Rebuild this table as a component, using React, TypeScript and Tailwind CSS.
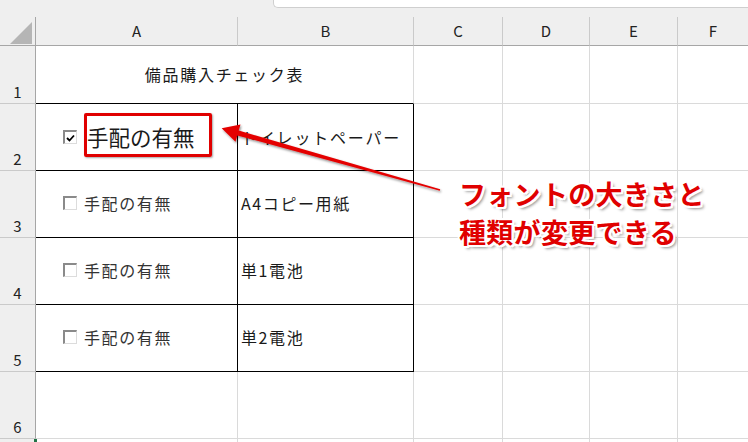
import React from "react";

const cols = ["A", "B", "C", "D", "E", "F"];
const items = ["A4コピー用紙", "単1電池", "単2電池"];

const gray = "border-r border-b border-[#dadada]";
const black = "border-r border-b border-black";

function CheckBox({ checked = false }: { checked?: boolean }) {
  return (
    <span className="flex h-[14px] w-[14px] shrink-0 items-center justify-center border-t-2 border-l-2 border-b border-r border-t-[#8a8a8a] border-l-[#8a8a8a] border-b-[#dcdcdc] border-r-[#dcdcdc] bg-white">
      {checked && (
        <svg width="9" height="8" viewBox="0 0 9 8">
          <path d="M1 4 L3.5 6.5 L8 1.5" fill="none" stroke="#000" strokeWidth="1.8" />
        </svg>
      )}
    </span>
  );
}

function RowHead({ n }: { n: number }) {
  return (
    <div className="flex items-end justify-center border-r border-b border-r-[#a6a6a6] border-b-[#cacaca] bg-[#efefef] pb-[4px] text-[15px] leading-none text-[#222]">
      {n}
    </div>
  );
}

function Blanks() {
  return (
    <>
      <div className={gray} />
      <div className={gray} />
      <div className={gray} />
      <div className="border-b border-[#dadada]" />
    </>
  );
}

export default function App() {
  return (
    <div className="relative h-[442px] w-[748px] overflow-hidden bg-white font-['Noto_Sans_CJK_JP',sans-serif] text-[#1a1a1a]">
      {/* formula bar strip */}
      <div className="relative h-[17px] bg-[#efefef]">
        <div className="absolute left-[273px] top-0 h-[8px] right-0 rounded-bl-[5px] border-b border-l border-[#cfcfcf] bg-white" />
      </div>

      <div className="grid grid-cols-[36px_202px_176px_89px_87px_88px_1fr] grid-rows-[29px_58px_67px_67px_67px_67px_67px_3px]">
        {/* header row */}
        <div className="relative border-r border-b border-r-[#a6a6a6] border-b-[#a6a6a6] bg-[#efefef]">
          <svg className="absolute left-[10px] top-[5px]" width="22" height="22" viewBox="0 0 22 22">
            <polygon points="22,0 22,22 0,22" fill="#b5b5b5" />
          </svg>
        </div>
        {cols.map((c, i) => (
          <div
            key={c}
            className={`flex items-center justify-center border-b border-b-[#a6a6a6] bg-[#efefef] text-[15px] text-[#222] ${
              i < cols.length - 1 ? "border-r border-r-[#cacaca]" : ""
            }`}
          >
            {c}
          </div>
        ))}

        {/* row 1 */}
        <RowHead n={1} />
        <div className="col-span-2 flex items-center justify-center border-r border-b border-r-[#dadada] border-b-black pb-[2px] text-[16px] tracking-[1.7px]">
          備品購入チェック表
        </div>
        <Blanks />

        {/* row 2 */}
        <RowHead n={2} />
        <div className={`flex items-center pl-[27px] ${black}`}>
          <CheckBox checked />
          <span className="ml-[10px] text-[21.5px] leading-none">手配の有無</span>
        </div>
        <div className={`flex items-center pl-[3px] text-[16px] tracking-[1.8px] ${black}`}>トイレットペーパー</div>
        <Blanks />

        {items.map((it, i) => (
          <React.Fragment key={it}>
            <RowHead n={i + 3} />
            <div className={`flex items-center pl-[27px] pb-[3px] ${black}`}>
              <CheckBox />
              <span className="ml-[7px] text-[16px] tracking-[1.6px] text-[#333]">手配の有無</span>
            </div>
            <div className={`flex items-center pl-[3px] pb-[3px] text-[16px] tracking-[1.6px] ${black}`}>{it}</div>
            <Blanks />
          </React.Fragment>
        ))}

        {/* row 6 */}
        <RowHead n={6} />
        <div className={gray} />
        <div className={gray} />
        <Blanks />

        {/* partial row */}
        <div className="relative border-r border-r-[#a6a6a6] bg-[#efefef]">
          <div className="absolute right-[-2px] top-0 h-[3px] w-[3px] bg-[#217346]" />
        </div>
        <div className="border-r border-[#dadada]" />
        <div className="border-r border-[#dadada]" />
        <div className="border-r border-[#dadada]" />
        <div className="border-r border-[#dadada]" />
        <div className="border-r border-[#dadada]" />
        <div />
      </div>

      {/* highlight box */}
      <div className="absolute left-[84px] top-[113px] h-[44px] w-[128px] rounded-[2px] border-[3.5px] border-[#e00000] shadow-[1px_1px_2px_rgba(0,0,0,0.35)]" />

      {/* arrow */}
      <svg className="pointer-events-none absolute left-0 top-0" width="748" height="442" viewBox="0 0 748 442">
        <defs>
          <filter id="sh" x="-10%" y="-10%" width="120%" height="130%">
            <feDropShadow dx="1" dy="1.5" stdDeviation="1" floodColor="#000" floodOpacity="0.45" />
          </filter>
        </defs>
        <polygon
          points="221.7,128.3 240.5,124.4 238.7,130.6 440.2,189.2 439.8,190.8 237.3,135.4 235.5,141.7"
          fill="#e40000"
          filter="url(#sh)"
        />
      </svg>

      {/* annotation */}
      <div className="absolute left-[459px] top-[175px] text-[27px] font-bold leading-[38px] tracking-[0.3px] text-[#e00000] [text-shadow:2px_0_0_#fff,-2px_0_0_#fff,0_2px_0_#fff,0_-2px_0_#fff,2px_2px_0_#fff,-2px_-2px_0_#fff,2px_-2px_0_#fff,-2px_2px_0_#fff,3px_3px_3px_rgba(0,0,0,0.45)]">
        <div>フォントの大きさと</div>
        <div>種類が変更できる</div>
      </div>
    </div>
  );
}
